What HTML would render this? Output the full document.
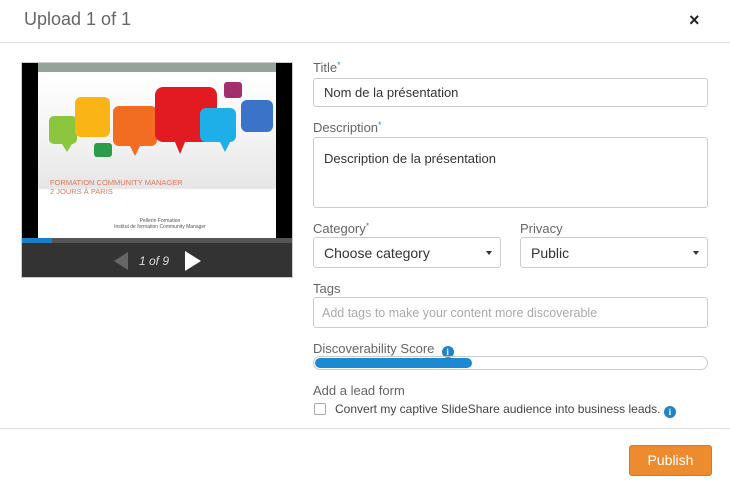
<!DOCTYPE html>
<html><head><meta charset="utf-8"><style>
*{box-sizing:border-box;margin:0;padding:0}
body{width:730px;height:489px;background:#fff;font-family:"Liberation Sans",sans-serif;position:relative;overflow:hidden;color:#555}
.a{position:absolute}
.lbl{position:absolute;left:313px;font-size:13px;color:#666}
.req{color:#2c8fd4;font-size:9px;vertical-align:top}
.in{position:absolute;border:1px solid #ccc;border-radius:3px;font-size:13px;color:#333;padding-left:10px;display:flex;align-items:center}
.caret{position:absolute;right:8px;top:13px;border-left:3px solid transparent;border-right:3px solid transparent;border-top:4px solid #333}
.info{display:inline-block;width:12px;height:12px;border-radius:50%;background:#1f83c7;color:#fff;font-size:9px;font-weight:bold;text-align:center;line-height:12px;font-family:"Liberation Serif",serif;vertical-align:-2px}
.tail{position:absolute;width:0;height:0;border-left:5px solid transparent;border-right:5px solid transparent}
</style></head><body>
<div class="a" style="left:24px;top:9px;font-size:18px;color:#666">Upload 1 of 1</div>
<div class="a" style="left:689px;top:10px;font-size:18px;font-weight:bold;color:#222">×</div>
<div class="a" style="left:0;top:42px;width:730px;height:1px;background:#e2e2e2"></div>

<div class="a" style="left:21px;top:62px;width:272px;height:216px;background:#000;border:1px solid #ccc"></div>
<div class="a" style="left:38px;top:63px;width:238px;height:9px;background:#95a39b"></div>
<div class="a" style="left:38px;top:72px;width:238px;height:166px;background:linear-gradient(#fff,#f3f3f3 40%,#e6e6e6 70%,#fff 71%)"></div>
<div class="a" style="left:49px;top:116px;width:28px;height:28px;background:#8cc63f;border-radius:5px"></div>
<div class="tail" style="left:62px;top:144px;border-top:8px solid #8cc63f"></div>
<div class="a" style="left:75px;top:97px;width:35px;height:40px;background:#fbb416;border-radius:6px"></div>
<div class="a" style="left:113px;top:106px;width:44px;height:40px;background:#f26d21;border-radius:6px"></div>
<div class="tail" style="left:130px;top:146px;border-top:10px solid #f26d21"></div>
<div class="a" style="left:155px;top:87px;width:62px;height:55px;background:#e21b23;border-radius:8px"></div>
<div class="tail" style="left:175px;top:142px;border-top:12px solid #e21b23"></div>
<div class="a" style="left:200px;top:108px;width:36px;height:34px;background:#1eaee8;border-radius:6px"></div>
<div class="tail" style="left:220px;top:142px;border-top:10px solid #1eaee8"></div>
<div class="a" style="left:241px;top:100px;width:32px;height:32px;background:#3b73c8;border-radius:6px"></div>
<div class="a" style="left:224px;top:82px;width:18px;height:16px;background:#a22e6d;border-radius:3px"></div>
<div class="a" style="left:94px;top:143px;width:18px;height:14px;background:#2e9b4a;border-radius:3px"></div>
<div class="a" style="left:50px;top:178px;font-size:7.5px;color:#e0765a;line-height:9px">FORMATION COMMUNITY MANAGER<br>2 JOURS À PARIS</div>
<div class="a" style="left:80px;top:218px;width:160px;font-size:5px;color:#555;text-align:center;line-height:6px">Pellerin Formation<br>Institut de formation Community Manager</div>
<div class="a" style="left:22px;top:238px;width:270px;height:5px;background:#555"></div>
<div class="a" style="left:22px;top:238px;width:30px;height:5px;background:#1b7fc8"></div>
<div class="a" style="left:22px;top:243px;width:270px;height:34px;background:#333"></div>
<div class="a" style="left:114px;top:252px;border-top:9px solid transparent;border-bottom:9px solid transparent;border-right:14px solid #666"></div>
<div class="a" style="left:139px;top:254px;font-size:12px;font-style:italic;color:#ddd">1 of 9</div>
<div class="a" style="left:185px;top:251px;border-top:10px solid transparent;border-bottom:10px solid transparent;border-left:16px solid #fff"></div>

<div class="lbl" style="top:60px">Title<span class="req">*</span></div>
<div class="in" style="left:313px;top:78px;width:395px;height:29px">Nom de la présentation</div>
<div class="lbl" style="top:120px">Description<span class="req">*</span></div>
<div class="in" style="left:313px;top:137px;width:395px;height:71px;align-items:flex-start;padding-top:13px">Description de la présentation</div>
<div class="lbl" style="top:221px">Category<span class="req">*</span></div>
<div class="in" style="left:313px;top:237px;width:188px;height:31px;font-size:14px">Choose category<span class="caret"></span></div>
<div class="lbl" style="top:221px;left:520px">Privacy</div>
<div class="in" style="left:520px;top:237px;width:188px;height:31px;font-size:14px">Public<span class="caret"></span></div>
<div class="lbl" style="top:281px">Tags</div>
<div class="in" style="left:313px;top:297px;width:395px;height:31px;color:#aaa;font-size:12.5px;padding-left:8px">Add tags to make your content more discoverable</div>
<div class="lbl" style="top:341px">Discoverability Score &nbsp;<span class="info">i</span></div>
<div class="a" style="left:313px;top:356px;width:395px;height:14px;border:1px solid #ccc;border-radius:7px"></div>
<div class="a" style="left:315px;top:358px;width:157px;height:10px;background:#1b8ad3;border-radius:5px"></div>
<div class="lbl" style="top:383px">Add a lead form</div>
<div class="a" style="left:314px;top:403px;width:12px;height:12px;border:1px solid #aaa;border-radius:2px"></div>
<div class="a" style="left:335px;top:402px;font-size:12px;color:#444">Convert my captive SlideShare audience into business leads. <span class="info">i</span></div>
<div class="a" style="left:0;top:428px;width:730px;height:1px;background:#ddd"></div>
<div class="a" style="left:629px;top:445px;width:83px;height:31px;background:#ec8c2f;border:1px solid #d87a20;border-radius:3px;color:#fff;font-size:14px;text-align:center;line-height:29px">Publish</div>
</body></html>
